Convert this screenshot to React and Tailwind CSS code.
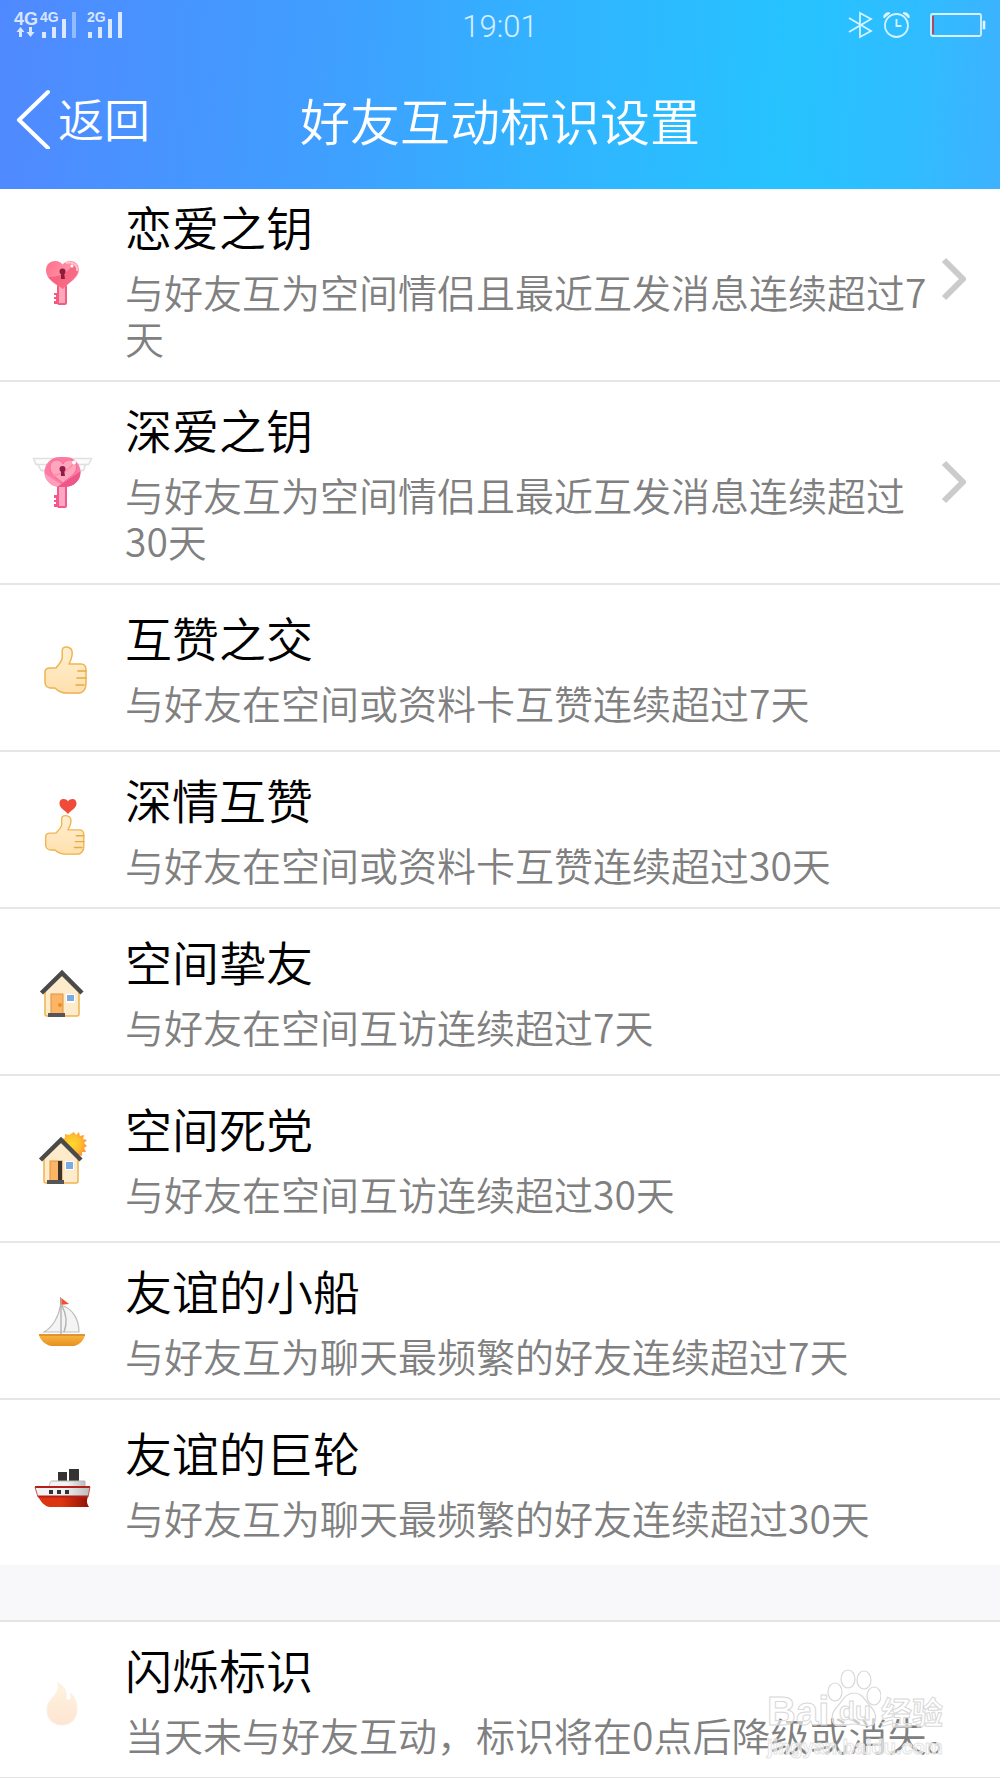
import React from 'react';
import clsx from 'clsx';

const INTERACTIONS = [
  { title: '恋爱之钥', desc: '与好友互为空间情侣且最近互发消息连续超过7天', Icon: KeyIcon, href: '#love-key' },
  { title: '深爱之钥', desc: '与好友互为空间情侣且最近互发消息连续超过30天', Icon: WingedKeyIcon, href: '#deep-love-key' },
  { title: '互赞之交', desc: '与好友在空间或资料卡互赞连续超过7天', Icon: ThumbIcon, roomy: true },
  { title: '深情互赞', desc: '与好友在空间或资料卡互赞连续超过30天', Icon: HeartThumbIcon },
  { title: '空间挚友', desc: '与好友在空间互访连续超过7天', Icon: HouseIcon, roomy: true },
  { title: '空间死党', desc: '与好友在空间互访连续超过30天', Icon: SunHouseIcon, roomy: true },
  { title: '友谊的小船', desc: '与好友互为聊天最频繁的好友连续超过7天', Icon: SailboatIcon },
  { title: '友谊的巨轮', desc: '与好友互为聊天最频繁的好友连续超过30天', Icon: ShipIcon, roomy: true },
];

function IconBox({ children }) {
  return (
    <svg viewBox="0 0 72 60" className="w-[72px] h-[60px] overflow-visible" aria-hidden="true">
      {children}
    </svg>
  );
}

function KeyIcon() {
  return (
    <IconBox>
      <defs>
        <linearGradient id="keyHeart" x1="0" y1="0" x2="1" y2="0.6">
          <stop offset="0" stopColor="#ff6f8b" />
          <stop offset="1" stopColor="#ffa3b4" />
        </linearGradient>
      </defs>
      <path d="M28 43h5v11h-5v-3h2v-2h-2v-2h2v-2h-2z" fill="#f7577c" />
      <rect x="32" y="34" width="8" height="20" rx="1" fill="#ffa6bb" stroke="#f45b81" strokeWidth="2" />
      <path d="M37 39C29 34 20 29 20 20.500c0-6 4-9.500 9-9.500 4 0 6.500 2 7.500 3.500C38 13 40.500 11 44.500 11c5 0 8.500 3.500 8.500 9C53 28 43 32 37 39z" fill="url(#keyHeart)" />
      <path d="M22 27c8 0 19-2 25-13 4 0 6 4 5 8-2 7-10 11-15 17-5-4-11-7-15-12z" fill="#f4506f" opacity="0.65" />
      <path d="M40 13c6-2 12 2 11 8" fill="none" stroke="#ffc3cd" strokeWidth="2" />
      <circle cx="46" cy="16" r="1.500" fill="#fff" />
      <circle cx="36.500" cy="21.500" r="3" fill="#8f1d38" />
      <path d="M35 23h3l1 6h-4z" fill="#8f1d38" />
    </IconBox>
  );
}

function WingedKeyIcon() {
  return (
    <IconBox>
      <defs>
        <clipPath id="keyBow"><rect x="18.500" y="4" width="36" height="30" rx="15" /></clipPath>
      </defs>
      <g fill="#fcfcfc" stroke="#e0e0e0" strokeWidth="1.500">
        <path d="M7.500 5.500h58l-3 6h-3l-2 6h-3l-4 6H22l-4-6h-3l-3-6H10z" />
        <path d="M11 11.500h50M16 17.500h40" />
      </g>
      <path d="M28 42h5v12h-5v-3h2v-2h-2v-2h2v-2h-2z" fill="#f5578a" />
      <rect x="32" y="32" width="8" height="22" rx="1" fill="#ffa6c4" stroke="#f5578a" strokeWidth="2" />
      <g clipPath="url(#keyBow)">
        <rect x="18" y="4" width="37" height="31" fill="#fb7ba5" />
        <path d="M18 20l18 12-6 4H18z" fill="#ff9dbc" />
        <path d="M28 36l27-18v18z" fill="#ee5588" />
      </g>
      <path d="M37 30c-6-5-13-9-13-15 0-5 3-8 6.500-8 3.500 0 5.500 2 6.500 4 1-2 3-4 6.500-4 4 0 7 3 7 8 0 6-8.500 10-13.500 15z" fill="#ffa6bc" stroke="#f76c93" strokeWidth="1" />
      <path d="M27 22c8 0 15-4 20-11" fill="none" stroke="#ff8fab" strokeWidth="2" />
      <circle cx="48" cy="9.500" r="2" fill="#fff" />
      <circle cx="36.500" cy="16" r="3" fill="#8f1d48" />
      <path d="M35 17h3l1 6h-4z" fill="#8f1d48" />
    </IconBox>
  );
}

function Thumb() {
  return (
    <g strokeLinejoin="round" strokeLinecap="round">
      <path d="M37 10c3-2 8-1 9 3 1 5-1 9-3 13h12c4 0 5 3 5 6v14c0 5-3 9-7 9H41c-5 0-9-2-12-5h-4c-4 0-6-3-6-6V34c0-3 2-4 5-4h6c2-3 5-5 6-9 1-4-1-8 1-11z" transform="translate(0 1)" fill="#b9832d" opacity="0.25" />
      <path d="M37 10c3-2 8-1 9 3 1 5-1 9-3 13h12c4 0 5 3 5 6v14c0 5-3 9-7 9H41c-5 0-9-2-12-5h-4c-4 0-6-3-6-6V34c0-3 2-4 5-4h6c2-3 5-5 6-9 1-4-1-8 1-11z" fill="url(#thumbSkin)" stroke="#efb550" strokeWidth="1.500" />
      <path d="M52 33h8M51 40h9M50 47h8" fill="none" stroke="#e9a941" strokeWidth="1.600" />
    </g>
  );
}

function SkinGradient() {
  return (
    <defs>
      <linearGradient id="thumbSkin" x1="0" y1="0" x2="0" y2="1">
        <stop offset="0" stopColor="#fff0d2" />
        <stop offset="1" stopColor="#ffe0ad" />
      </linearGradient>
    </defs>
  );
}

function ThumbIcon() {
  return (
    <IconBox>
      <SkinGradient />
      <Thumb />
    </IconBox>
  );
}

function HeartThumbIcon() {
  return (
    <IconBox>
      <SkinGradient />
      <path d="M42 14C38.500 10 33.500 8 33.500 3.500 33.500 0 35.500-1 37.500-1c2.500 0 4 1 4.500 2.500C42.500 0 44.500-1 46.500-1c2.500 0 4 2 4 4.500C50.500 8 45.500 10 42 14z" fill="#f04a38" />
      <g transform="translate(2 8) scale(0.930 0.840)">
        <Thumb />
      </g>
    </IconBox>
  );
}

function HouseBody({ open }) {
  return (
    <>
      <path d="M19 29L36 11l17 18v23c0 1-1 2-2 2H21c-1 0-2-1-2-2z" fill="#fdebcb" stroke="#f0b34d" strokeWidth="1.500" />
      <path d="M15.500 31L36 11l20 20" fill="none" stroke="#4a4a4a" strokeWidth="4.500" />
      <rect x="25" y="32" width="12" height="20" fill="#fbb564" stroke="#e09440" strokeWidth="1" />
      {open
        ? <path d="M33 32h4v20h-4z" fill="#3b332c" />
        : <circle cx="34" cy="43" r="2" fill="#e58d26" />}
      <rect x="40" y="32" width="9" height="9" fill="#fff" />
      <rect x="41" y="33" width="7" height={open ? 7 : 6} fill="#7aabe2" />
      <rect x="22" y="51" width="17" height="4" fill="#555" />
    </>
  );
}

function HouseIcon() {
  return (
    <IconBox>
      <HouseBody />
    </IconBox>
  );
}

function SunHouseIcon() {
  return (
    <IconBox>
      <defs>
        <radialGradient id="sun" cx="0.45" cy="0.45" r="0.55">
          <stop offset="0" stopColor="#ffd92e" />
          <stop offset="0.550" stopColor="#ffc02c" />
          <stop offset="1" stopColor="#ff9436" />
        </radialGradient>
      </defs>
      <path
        d="M48 3l2 3 3-3 1 4 4-1-1 4 4 1-3 3 3 3-3 2 2 4-4 0 0 4-4-1-2 3-3-2-3 2-2-3-4 1 0-4-4 0 2-4-2-3 3-2-2-4 4-1 0-4 4 1z"
        fill="url(#sun)"
      />
      <g transform="translate(-1 0)">
        <HouseBody open />
      </g>
    </IconBox>
  );
}

function SailboatIcon() {
  return (
    <IconBox>
      <defs>
        <linearGradient id="hull" x1="0" y1="0" x2="0" y2="1">
          <stop offset="0" stopColor="#f9b944" />
          <stop offset="1" stopColor="#e88f1e" />
        </linearGradient>
      </defs>
      <path d="M34 6l9 7-9 1z" fill="#f0502f" />
      <path d="M34.500 14C33 25 27 36 18 41h35c0-12-6-24-18.500-27z" fill="#f4f4f4" stroke="#bdbdbd" strokeWidth="1.200" />
      <path d="M35 7v37M36 15c5 9 5 18 2 26" fill="none" stroke="#b3b3b3" strokeWidth="1.400" />
      <path d="M13 43h46c0 5-6 12-12 12H26c-6 0-13-7-13-12z" fill="url(#hull)" />
      <path d="M13 44h46" stroke="#d9882a" strokeWidth="1.500" />
    </IconBox>
  );
}

function ShipIcon() {
  return (
    <IconBox>
      <defs>
        <linearGradient id="shipHull" x1="0" y1="0" x2="1" y2="0">
          <stop offset="0.450" stopColor="#dc3611" />
          <stop offset="0.700" stopColor="#bd240c" />
          <stop offset="1" stopColor="#8d1305" />
        </linearGradient>
        <linearGradient id="shipDeck" x1="0" y1="0" x2="1" y2="0">
          <stop offset="0.500" stopColor="#f3f3f3" />
          <stop offset="1" stopColor="#bcbcbc" />
        </linearGradient>
      </defs>
      <path d="M32 19h9v9h-9zM43 16h10v12H43z" fill="#333" />
      <path d="M26 28h33v6H23c1-4 1-6 3-6z" fill="url(#shipDeck)" stroke="#b5b5b5" strokeWidth="1" />
      <path d="M9 34h55l-2 10H13z" fill="url(#shipDeck)" />
      <path d="M12 43h50c-1 4-2 6 1 11H24c-5 0-10-6-12-11z" fill="url(#shipHull)" />
      <path d="M9 34h55M12 43.500h50" stroke="#b51f1b" strokeWidth="2" />
      <path d="M9 34l3 10M64 34l-2 10" stroke="#c9504a" strokeWidth="1" />
      <path d="M23 37h4v4h-4zM31 37h4v4h-4zM39 37h4v4h-4z" fill="#333" />
    </IconBox>
  );
}

function FlameIcon() {
  return (
    <IconBox>
      <defs>
        <linearGradient id="flame" x1="0" y1="0" x2="0" y2="1">
          <stop offset="0" stopColor="#fff3dc" />
          <stop offset="1" stopColor="#fee5d3" />
        </linearGradient>
      </defs>
      <path d="M32 13c6 3 9 8 8 14 0 4 4 4 5 1 0-2 0-3-1-5 4 3 7 9 7 16 0 10-6 16-15 16s-15-6-15-15c0-13 14-14 11-27z" fill="url(#flame)" stroke="#fcefe2" strokeWidth="1" />
    </IconBox>
  );
}

function SignalIcons() {
  return (
    <svg viewBox="0 0 130 48" className="w-[130px] h-12" fill="#fff" fillOpacity="0.8" fontWeight="700" aria-hidden="true">
      <g className="font-['Liberation_Sans']">
        <text x="14" y="25" fontSize="18">4G</text>
        <text x="40" y="22" fontSize="14">4G</text>
        <text x="87" y="22" fontSize="14">2G</text>
      </g>
      <path d="M20.500 27l4 5h-2.500v5h-3v-5h-2.500zM30.500 37l-4-5h2.500v-5h3v5h2.500z" />
      <path d="M42 32h4v6h-4zM52 27h4v11h-4zM62 19h4v19h-4z" />
      <path d="M72 12h4v26h-4z" fillOpacity="0.400" />
      <path d="M88 32h4v6h-4zM98 27h4v11h-4zM108 19h4v19h-4zM118 12h4v26h-4z" />
    </svg>
  );
}

function DeviceIcons() {
  return (
    <svg viewBox="840 0 160 48" className="w-40 h-12 justify-self-end" fill="none" stroke="#fff" strokeOpacity="0.800" strokeWidth="1.800" aria-hidden="true">
      <path d="M849 18l22 13-11 6V13l11 6-22 13" />
      <circle cx="896.500" cy="25.500" r="11.500" />
      <path d="M896.500 19v7h5" />
      <path d="M884 18c-1-4 3-6 6-5zM909 18c1-4-3-6-6-5z" fill="#fff" fillOpacity="0.800" strokeWidth="1" />
      <rect x="931" y="14" width="50" height="22" rx="1.500" />
      <path d="M983 21h2v8h-2z" fill="#fff" fillOpacity="0.800" strokeWidth="1" strokeOpacity="0.500" />
      <path d="M933 16v18" stroke="#c8303f" strokeWidth="2" />
    </svg>
  );
}

function Header() {
  return (
    <header className="bg-[linear-gradient(94deg,#5089ff_0%,#409eff_32%,#33b1ff_52%,#26c3ff_78%,#2fbdff_90%,#3db2ff_100%)] text-white">
      <div className="grid grid-cols-3 h-12">
        <SignalIcons />
        <time className="justify-self-center font-['Roboto'] font-light text-[31px] leading-[54px] text-white/80">19:01</time>
        <DeviceIcons />
      </div>
      <div className="grid grid-cols-[1fr_auto_1fr] items-center h-[141px]">
        <a href="#back" className="flex items-center gap-[7px] pl-4 text-[46px] leading-[60px]">
          <svg viewBox="0 0 35 60" className="w-[35px] h-[60px]" fill="none" stroke="currentColor" strokeWidth="4" strokeLinecap="round" strokeLinejoin="round" aria-hidden="true">
            <path d="M32 3L3 31l29 28" />
          </svg>
          <span className="pb-1">返回</span>
        </a>
        <h1 className="text-[50px] leading-[60px]">好友互动标识设置</h1>
      </div>
    </header>
  );
}

function Row({ title, desc, Icon, href, roomy }) {
  const Tag = href ? 'a' : 'div';
  return (
    <Tag href={href} className={clsx('flex items-center pr-8', roomy ? 'pt-6 pb-[25px]' : 'pt-[19px] pb-5')}>
      <div className="w-[125px] shrink-0 pl-[26px] pt-0.5">
        <Icon />
      </div>
      <div className="flex-1">
        <h2 className="text-[47px] leading-[56px] text-black">{title}</h2>
        <p className="mt-3.5 text-[39px] leading-[46px] text-[#808080]">{desc}</p>
      </div>
      {href && (
        <svg viewBox="0 0 27 44" className="w-[27px] h-11 shrink-0" fill="none" stroke="#cbcbcb" strokeWidth="6" strokeLinejoin="round" aria-hidden="true">
          <path d="M3 3l19 19L3 41" />
        </svg>
      )}
    </Tag>
  );
}

function Watermark() {
  return (
    <div className="absolute right-[53px] bottom-2.5 h-[98px] w-[180px] text-white/60 font-bold pointer-events-none [-webkit-text-stroke:1px_#d8d8d8]">
      <svg viewBox="0 0 54 60" className="absolute left-[60px] top-0 w-[54px] h-[60px]" fill="#fff" fillOpacity="0.600" stroke="#d8d8d8" strokeWidth="1.200" aria-hidden="true">
        <ellipse cx="8" cy="23" rx="7" ry="9" />
        <ellipse cx="21" cy="10" rx="7" ry="9" />
        <ellipse cx="37" cy="11" rx="7" ry="9" />
        <ellipse cx="47" cy="27" rx="7" ry="9" />
        <path d="M27 24c9 0 11 8 17 14 7 7 6 19-3 19-6 0-9-2-14-2s-9 2-15 2c-8 0-9-11-3-18 6-6 9-15 18-15z" />
      </svg>
      <div className="absolute left-0 top-5 flex items-center font-['Liberation_Sans'] text-[40px] leading-[44px]">
        <span className="w-[72px]">Bai</span>
        <span className="w-[42px] text-[26px]">du</span>
        <span className="font-['Noto_Sans_CJK_SC'] text-[31px]">经验</span>
      </div>
      <div className="absolute left-0 top-[66px] font-['Liberation_Sans'] text-[20px] leading-[24px] [-webkit-text-stroke:1px_#e4e4e4]">jingyan.baidu.com</div>
    </div>
  );
}

export default function App() {
  return (
    <div className="relative bg-white font-['Noto_Sans_CJK_SC',sans-serif] font-[350] overflow-hidden">
      <Header />
      <main>
        <div className="overflow-hidden">
          {/* list is scrolled slightly under the header */}
          <ul className="-mt-2.5 divide-y-2 divide-[#e6e6e6]">
            {INTERACTIONS.map(item => (
              <li key={item.title}><Row {...item} /></li>
            ))}
          </ul>
        </div>
        <div className="h-[55px] bg-[#f8f8fb]" />
        <section className="relative border-t-2 border-b border-[#e3e5e5]">
          <Row title="闪烁标识" desc="当天未与好友互动，标识将在0点后降级或消失。" Icon={FlameIcon} />
          <Watermark />
        </section>
      </main>
    </div>
  );
}
